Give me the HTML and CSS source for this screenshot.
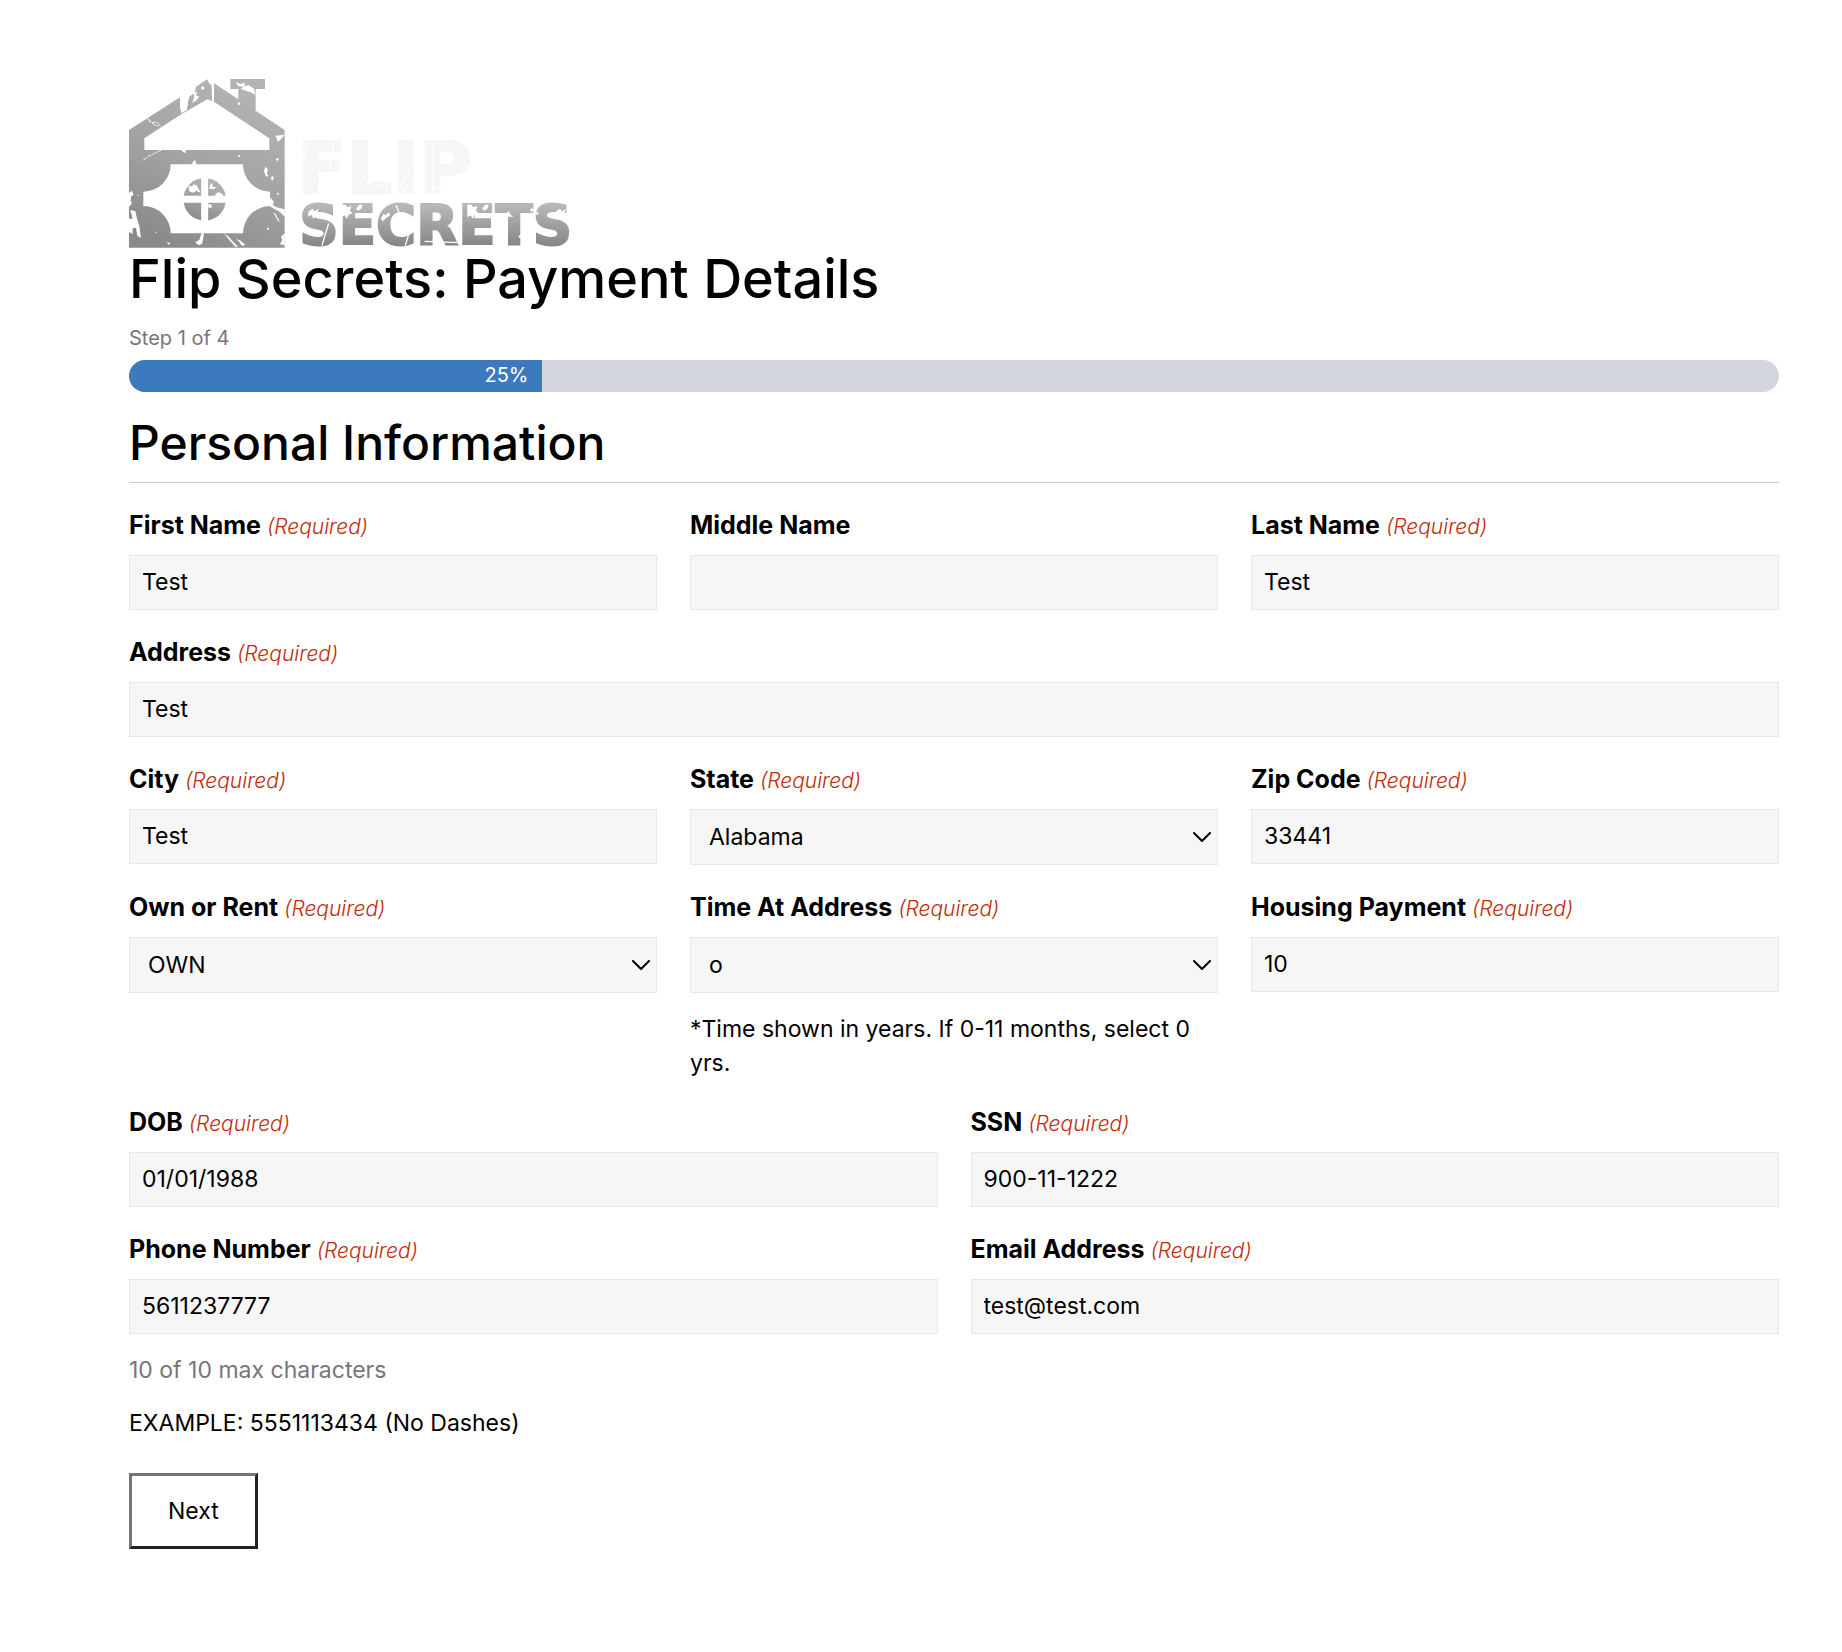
FILE: index.html
```html
<!DOCTYPE html>
<html lang="en">
<head>
<meta charset="utf-8">
<meta name="viewport" content="width=device-width, initial-scale=1">
<title>Flip Secrets: Payment Details</title>
<link rel="stylesheet" href="styles.css">
</head>
<body>
<main class="page">
  <svg class="logo" viewBox="27 27 1362 510" role="img" aria-label="Flip Secrets">
    <defs>
      <linearGradient id="house" x1="0.7" y1="0" x2="0.3" y2="1">
        <stop offset="0" stop-color="#b4b4b4"/>
        <stop offset="0.5" stop-color="#a4a4a4"/>
        <stop offset="1" stop-color="#8a8a8a"/>
      </linearGradient>
      <linearGradient id="word" gradientUnits="userSpaceOnUse" x1="0" y1="405" x2="0" y2="528">
        <stop offset="0" stop-color="#b8b8b8"/>
        <stop offset="1" stop-color="#868686"/>
      </linearGradient>
    </defs>
    <path fill="url(#house)" fill-rule="evenodd" d="M27 180L180 82L182 118L200 122L206 80L224 70L228 50L262 28L266 38L275 46L276 88L282 95V40L355 88V57H331V27H435V57H407V122L494 180V533H27ZM73 205V240H448V205L282 95L262 88L196 126L186 131ZM152 283A82 82 0 0 1 70 365V408A82 82 0 0 1 152 490H369A82 82 0 0 1 450 408V365A82 82 0 0 1 369 283Z"/>
    <circle cx="254" cy="388" r="64" fill="url(#house)"/>
    <path stroke="#fff" stroke-width="21" d="M254 320V456M186 388H322"/>
    <g fill="#fff">
      <path d="M276 40L282 38V97L276 91ZM180 80L190 76L186 100L194 104L200 84L210 74L204 94L200 120L184 130L180 110ZM222 68L232 66L228 76L238 80L226 94L216 98L222 84Z"/>
      <path d="M347 35L360 42L376 38L372 48L386 46L402 56L406 74L390 66L376 62L362 56L370 50L354 48Z"/>
      <path d="M466 197L494 194L484 206L474 216ZM436 290L443 296L441 312L446 318L438 320L432 304ZM456 318L462 322L458 332L452 326ZM218 276L225 270L230 284H217ZM183 240H197V250L190 246Z"/>
      <path d="M450 382L462 396L458 406L470 412L494 418V440L480 426L462 416L444 406ZM483 500L494 490V526L480 523L487 510ZM460 428L466 431L480 456L474 452Z"/>
      <path d="M27 368L36 362L41 374L34 378L32 392L36 400L27 410ZM31 420L46 424L52 450L58 468L63 503L52 498L48 474H38V492L27 486V446H38Z"/>
      <path d="M244 490H252L250 504L246 522L236 526L226 517L238 510ZM311 490L326 500L344 520L354 530H346L330 512ZM348 506L362 512L376 524L366 528L358 516ZM140 516L152 520L146 524Z"/>
      <path d="M205 345L214 350L224 342L230 362L218 368L208 364ZM270 344L277 340L278 350L290 352L280 358L268 356ZM284 374L296 366L310 374L302 380L290 378ZM264 402L275 404L276 412L266 414ZM218 344L230 346L241 366L234 366Z"/>
      <circle cx="248" cy="54" r="5"/><circle cx="357" cy="101" r="4"/><circle cx="472" cy="268" r="4"/><circle cx="357" cy="258" r="3"/><circle cx="444" cy="476" r="3"/><circle cx="54" cy="376" r="2"/><circle cx="109" cy="487" r="2"/><circle cx="474" cy="371" r="3"/>
    </g>
    <path fill="none" stroke="#fff" stroke-width="3" stroke-dasharray="9 3 4 2" d="M82 146L98 158L108 156L124 170M86 152L106 166L118 168M70 270L86 258L104 250L124 240"/>
    <text class="logo-flip" x="532" y="369">FLIP</text>
    <text class="logo-secrets" x="538" y="523" fill="url(#word)" stroke="url(#word)">SECRETS</text>
    <g fill="none" stroke="#fff" stroke-width="4">
      <path d="M562 210L550 268M642 212L628 304M656 280L650 304M886 270L846 342M836 340L866 372M940 202V372M966 212L990 240M1022 268L1054 300M932 354H980"/>
      <path d="M626 460L606 526M828 406L838 430M866 494L856 526M1368 460L1348 526M914 514L1020 518"/>
    </g>
    <g fill="#fff">
      <path d="M566 424L578 416L584 424L596 416L592 428L606 432L590 436L580 446L574 434L564 440ZM664 404H676L682 412L694 408L690 422L698 430L686 434L680 446L674 436L664 442ZM708 416L718 404H728L724 416L714 422ZM782 446L790 432L798 436L806 426L810 436L798 444L788 454ZM1042 404H1054L1060 412L1072 408L1068 422L1076 430L1064 434L1058 446L1052 436L1042 442ZM1086 416L1096 404H1106L1102 416L1092 422ZM1158 430L1166 424L1172 434L1180 440H1158ZM1308 424L1320 416L1326 424L1338 416L1334 428L1348 432L1332 436L1322 446L1316 434L1306 440Z"/>
      <circle cx="1208" cy="448" r="5"/><circle cx="1222" cy="462" r="4"/><circle cx="1212" cy="482" r="5"/><circle cx="1200" cy="500" r="4"/><circle cx="1218" cy="514" r="5"/><circle cx="1236" cy="420" r="5"/><circle cx="1252" cy="430" r="4"/>
      <circle cx="730" cy="322" r="4"/><circle cx="746" cy="340" r="5"/><circle cx="736" cy="358" r="4"/><circle cx="784" cy="346" r="5"/><circle cx="802" cy="358" r="5"/><circle cx="816" cy="340" r="4"/><circle cx="568" cy="360" r="4"/><circle cx="584" cy="340" r="3"/><circle cx="862" cy="350" r="5"/><circle cx="882" cy="362" r="4"/>
    </g>
  </svg>
  <h1 class="title">Flip Secrets: Payment Details</h1>

  <form class="form">
    <p class="step" id="step">Step 1 of 4</p>
    <div class="progress" role="progressbar" aria-labelledby="step" aria-valuenow="25" aria-valuemin="0" aria-valuemax="100">
      <div class="progress-fill" style="width: 25%">25%</div>
    </div>

    <h2 class="section-title">Personal Information</h2>

    <div class="fields">
      <div class="field third">
        <label class="label" for="first">First Name <span class="required">(Required)</span></label>
        <input class="input" id="first" type="text" value="Test" required>
      </div>
      <div class="field third">
        <label class="label" for="middle">Middle Name</label>
        <input class="input" id="middle" type="text">
      </div>
      <div class="field third">
        <label class="label" for="last">Last Name <span class="required">(Required)</span></label>
        <input class="input" id="last" type="text" value="Test" required>
      </div>

      <div class="field full">
        <label class="label" for="address">Address <span class="required">(Required)</span></label>
        <input class="input" id="address" type="text" value="Test" required>
      </div>

      <div class="field third">
        <label class="label" for="city">City <span class="required">(Required)</span></label>
        <input class="input" id="city" type="text" value="Test" required>
      </div>
      <div class="field third">
        <label class="label" for="state">State <span class="required">(Required)</span></label>
        <div class="select-wrap">
          <select class="select" id="state" required><option>Alabama</option><option>Alaska</option><option>Florida</option></select>
          <svg class="chevron" viewBox="0 0 18 11" aria-hidden="true"><path d="M1 1L9 9L17 1"/></svg>
        </div>
      </div>
      <div class="field third">
        <label class="label" for="zip">Zip Code <span class="required">(Required)</span></label>
        <input class="input" id="zip" type="text" value="33441" required>
      </div>

      <div class="field third">
        <label class="label" for="own">Own or Rent <span class="required">(Required)</span></label>
        <div class="select-wrap">
          <select class="select" id="own" required><option>OWN</option><option>RENT</option></select>
          <svg class="chevron" viewBox="0 0 18 11" aria-hidden="true"><path d="M1 1L9 9L17 1"/></svg>
        </div>
      </div>
      <div class="field third">
        <label class="label" for="time">Time At Address <span class="required">(Required)</span></label>
        <div class="select-wrap">
          <select class="select" id="time" aria-describedby="time-note" required><option>o</option><option>1</option><option>2</option></select>
          <svg class="chevron" viewBox="0 0 18 11" aria-hidden="true"><path d="M1 1L9 9L17 1"/></svg>
        </div>
        <p class="note" id="time-note">*Time shown in years. If 0-11 months, select 0 yrs.</p>
      </div>
      <div class="field third">
        <label class="label" for="housing">Housing Payment <span class="required">(Required)</span></label>
        <input class="input" id="housing" type="text" value="10" required>
      </div>

      <div class="field half">
        <label class="label" for="dob">DOB <span class="required">(Required)</span></label>
        <input class="input" id="dob" type="text" value="01/01/1988" required>
      </div>
      <div class="field half">
        <label class="label" for="ssn">SSN <span class="required">(Required)</span></label>
        <input class="input" id="ssn" type="text" value="900-11-1222" required>
      </div>

      <div class="field half">
        <label class="label" for="phone">Phone Number <span class="required">(Required)</span></label>
        <input class="input" id="phone" type="tel" maxlength="10" value="5611237777" aria-describedby="phone-count phone-note" required>
        <p class="note muted" id="phone-count">10 of 10 max characters</p>
        <p class="note" id="phone-note">EXAMPLE: 5551113434 (No Dashes)</p>
      </div>
      <div class="field half">
        <label class="label" for="email">Email Address <span class="required">(Required)</span></label>
        <input class="input" id="email" type="email" value="test@test.com" required>
      </div>
    </div>

    <button class="next" type="button">Next</button>
  </form>
</main>
</body>
</html>
```
FILE: styles.css
```css
*, *::before, *::after { box-sizing: border-box; }

body {
  margin: 0;
  background: #fff;
  color: #000;
  font-family: Inter, "Liberation Sans", sans-serif;
  font-size: 23px;
  line-height: 34px;
}

.page { padding: 79px 63px 80px 129px; }

.logo {
  display: block;
  width: 454px;
  max-width: 100%;
  height: auto;
  overflow: visible;
}

.logo-flip, .logo-secrets {
  font-family: "DejaVu Sans", sans-serif;
  font-weight: 700;
  stroke-width: 6;
}
.logo-flip { font-size: 216px; fill: #f6f6f6; stroke: #f6f6f6; }
.logo-secrets { font-size: 164px; }

.title {
  margin: 0;
  font-size: 54px;
  font-weight: 500;
  line-height: 60px;
}

.step {
  margin: 15px 0 8px;
  color: #767676;
  font-size: 20px;
  line-height: 28px;
}

.progress {
  height: 32px;
  border-radius: 16px;
  background: #d3d6dc;
  overflow: hidden;
}

.progress-fill {
  height: 100%;
  padding-right: 13px;
  background: #3c79bf;
  color: #fff;
  font-size: 20px;
  line-height: 30px;
  text-align: right;
}

.section-title {
  margin: 24px 0 0;
  padding-bottom: 12px;
  border-bottom: 1px solid #c9c9c9;
  font-size: 48px;
  font-weight: 500;
  line-height: 54px;
}

.fields {
  display: grid;
  grid-template-columns: repeat(6, minmax(0, 1fr));
  gap: 26px 33px;
  margin-top: 26px;
}

.third { grid-column: span 2; }
.half { grid-column: span 3; }
.full { grid-column: 1 / -1; }

.label {
  display: block;
  margin-bottom: 14px;
  font-size: 25px;
  font-weight: 700;
  line-height: 32px;
}

.required {
  color: #c02b0a;
  font-size: 21px;
  font-style: italic;
  font-weight: 300;
  line-height: 1;
}

.input, .select {
  display: block;
  width: 100%;
  height: 55px;
  margin: 0;
  padding: 0 12px 2px;
  border: 1px solid #e8e8e8;
  border-radius: 0;
  background: #f6f6f6;
  color: #000;
  font: inherit;
}

.select {
  height: 56px;
  padding: 0 40px 0 18px;
  appearance: none;
}

.select-wrap { display: grid; align-items: center; }
.select-wrap > * { grid-area: 1 / 1; }

.chevron {
  justify-self: end;
  width: 18px;
  height: 11px;
  margin-right: 7px;
  fill: none;
  stroke: #000;
  stroke-width: 2;
  stroke-linecap: round;
  stroke-linejoin: round;
  pointer-events: none;
}

.note { margin: 19px 0 0; }
.muted { color: #767676; }

.next {
  display: block;
  margin-top: 33px;
  padding: 18px 36px;
  border: 3px solid;
  border-color: #767676 #212121 #212121 #767676;
  background: #fff;
  color: #000;
  font: inherit;
}

@media (max-width: 900px) {
  .page { padding: 40px 24px; }
  .third, .half { grid-column: 1 / -1; }
}
```
